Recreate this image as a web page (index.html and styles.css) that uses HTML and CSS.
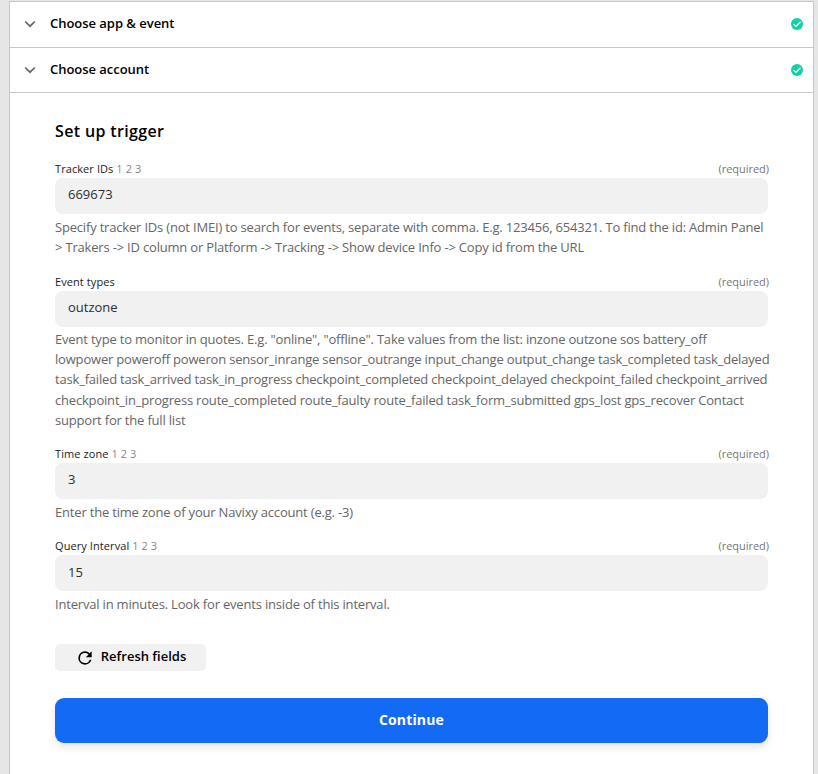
FILE: index.html
```html
<!DOCTYPE html>
<html lang="en">
<head>
<meta charset="utf-8">
<title>Set up trigger</title>
<link rel="stylesheet" href="styles.css">
</head>
<body>
<main class="panel">
  <section class="step">
    <svg class="chevron" viewBox="0 0 12 12"><path d="M1.200 3.500 6 8.200l4.800-4.700"/></svg>
    <h2>Choose app &amp; event</h2>
    <svg class="check" viewBox="0 0 12 12"><circle cx="6" cy="6" r="6"/><path d="M2.500 6.100 4.900 8.400 9.500 3.800"/></svg>
  </section>
  <section class="step">
    <svg class="chevron" viewBox="0 0 12 12"><path d="M1.200 3.500 6 8.200l4.800-4.700"/></svg>
    <h2>Choose account</h2>
    <svg class="check" viewBox="0 0 12 12"><circle cx="6" cy="6" r="6"/><path d="M2.500 6.100 4.900 8.400 9.500 3.800"/></svg>
  </section>
  <form class="setup">
    <h1>Set up trigger</h1>
    <div class="field tracker">
      <div class="label"><span>Tracker IDs <i>1 2 3</i></span><em>(required)</em></div>
      <div class="input">669673</div>
      <p>Specify tracker IDs (not IMEI) to search for events, separate with comma. E.g. 123456, 654321. To find the id: Admin Panel<br>&gt; Trakers -&gt; ID column or Platform -&gt; Tracking -&gt; Show device Info -&gt; Copy id from the URL</p>
    </div>
    <div class="field events">
      <div class="label"><span>Event types</span><em>(required)</em></div>
      <div class="input">outzone</div>
      <p>Event type to monitor in quotes. E.g. "online", "offline". Take values from the list: inzone outzone sos battery_off<br>lowpower poweroff poweron sensor_inrange sensor_outrange input_change output_change task_completed task_delayed<br>task_failed task_arrived task_in_progress checkpoint_completed checkpoint_delayed checkpoint_failed checkpoint_arrived<br>checkpoint_in_progress route_completed route_faulty route_failed task_form_submitted gps_lost gps_recover Contact<br>support for the full list</p>
    </div>
    <div class="field zone">
      <div class="label"><span>Time zone <i>1 2 3</i></span><em>(required)</em></div>
      <div class="input">3</div>
      <p>Enter the time zone of your Navixy account (e.g. -3)</p>
    </div>
    <div class="field interval">
      <div class="label"><span>Query Interval <i>1 2 3</i></span><em>(required)</em></div>
      <div class="input">15</div>
      <p>Interval in minutes. Look for events inside of this interval.</p>
    </div>
    <button type="button" class="refresh"><svg viewBox="0 0 24 24"><path d="M17.650 6.350A7.960 7.960 0 0 0 12 4a8 8 0 1 0 7.730 10h-2.080A6 6 0 1 1 12 6c1.660 0 3.140.690 4.220 1.780L13 11h7V4z"/></svg><span>Refresh fields</span></button>
    <button type="button" class="continue">Continue</button>
  </form>
</main>
</body>
</html>
```
FILE: styles.css
```css
* { box-sizing: border-box; }
body { margin: 0; background: #e6e6e6; font-family: "Open Sans", sans-serif; color: #000; }
.panel { margin: 1px 4px 0 9px; height: 773px; background: #fff; border: 1px solid #c8c8c8; border-bottom: 0; overflow: hidden; }
.step { height: 46px; padding: 0 10px 2px 14px; display: flex; align-items: center; border-bottom: 1px solid #c8c8c8; }
.step + .step { height: 45px; padding-bottom: 0; }
.step h2 { margin: 0; padding-bottom: 2px; font-size: 13px; font-weight: 600; line-height: 18px; letter-spacing: -.03px; flex: 1; }
.chevron { width: 12px; height: 12px; margin-right: 14px; fill: none; stroke: #666; stroke-width: 1.7; }
.check { width: 12px; height: 12px; fill: #13d0a5; }
.check path { fill: none; stroke: #fff; stroke-width: 1.3; }
.setup { padding: 27px 45px 0; }
h1 { margin: 0 0 19px; font-size: 16px; line-height: 22px; font-weight: 600; letter-spacing: .36px; }
.field { height: 113px; }
.events { height: 172px; }
.zone { height: 92px; }
.interval { height: 106px; }
.label { display: flex; justify-content: space-between; height: 17px; font-size: 11px; line-height: 16px; color: #222; }
.label span { letter-spacing: .08px; }
.label i, .label em { font-style: normal; color: #777; }
.label i { color: #888; }
.label em { margin-right: -1px; letter-spacing: -.03px; }
.input { height: 36px; border-radius: 8px; background: #f1f1f1; padding: 0 13px; font-size: 13px; line-height: 33px; color: #2d2d2d; }
.interval .input { line-height: 35px; }
.field p { margin: 3px 0 0; font-size: 13px; letter-spacing: -.187px; line-height: 20.2px; color: #666; white-space: nowrap; }
.events p { margin-top: 2px; }
button { font: 600 13px/18px "Open Sans", sans-serif; border: 0; padding: 0; display: flex; align-items: center; justify-content: center; }
.refresh { width: 151px; height: 27px; border-radius: 5px; background: #f1f1f1; gap: 6px; color: #000; }
.refresh svg { width: 20px; height: 20px; }
.refresh span { padding-bottom: 3px; }
.continue { width: 713px; height: 45px; margin-top: 27px; padding-bottom: 2px; border-radius: 9px; background: #136bf5; color: #fff; font-size: 14px; font-weight: 700; letter-spacing: .15px; box-shadow: 0 4px 8px #0000001c; }
```
